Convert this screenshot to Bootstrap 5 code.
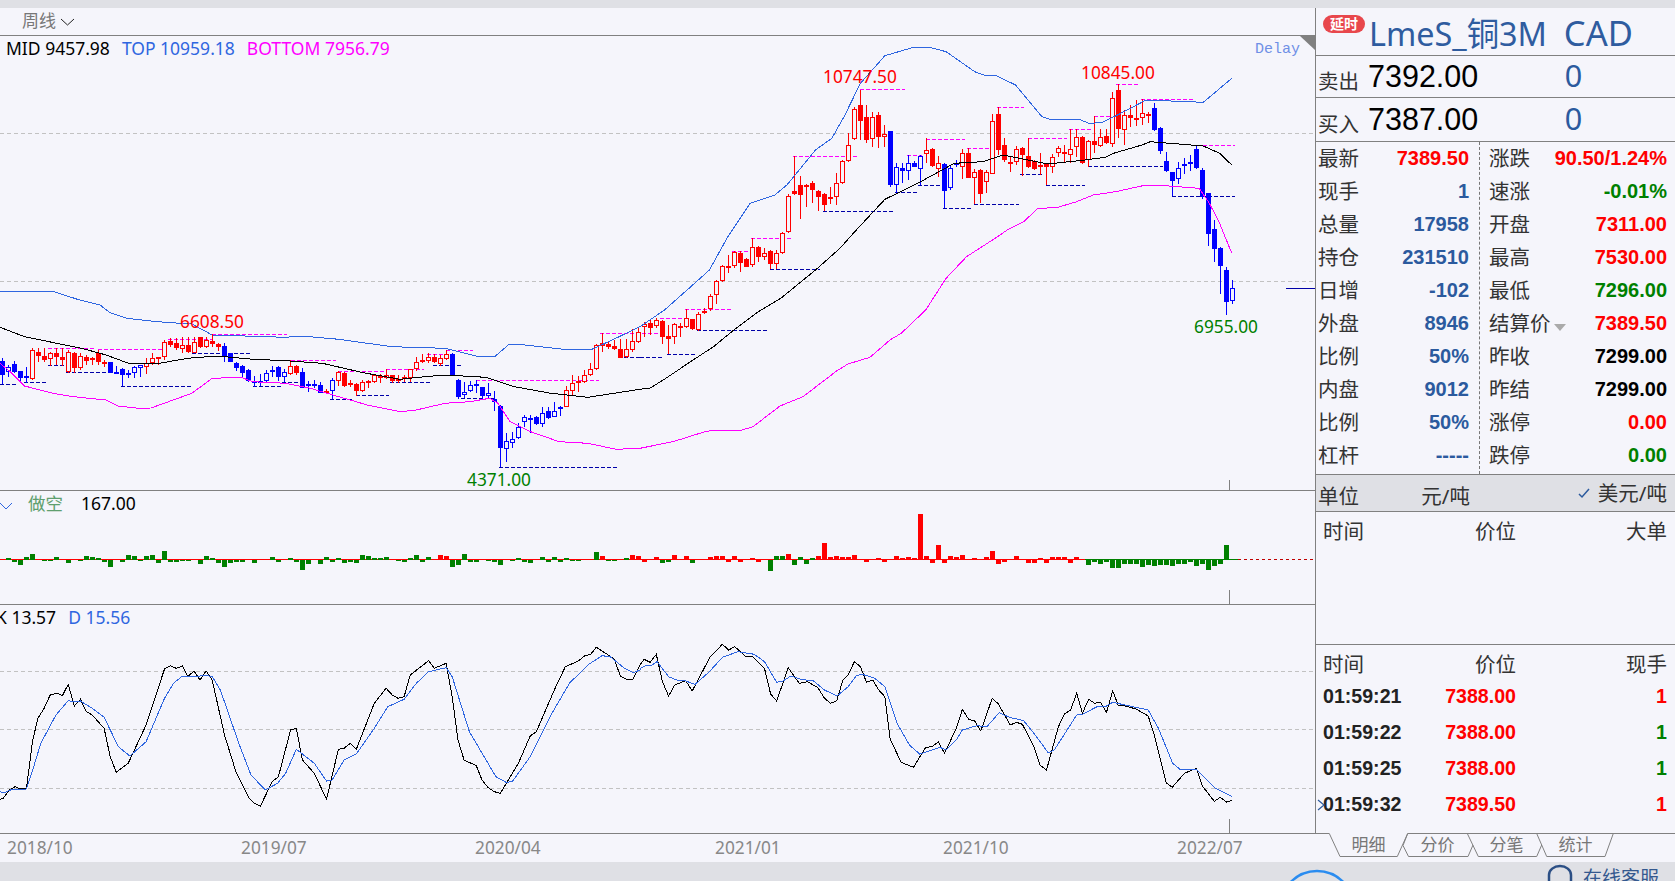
<!DOCTYPE html>
<html lang="zh">

<head>
    <meta charset="UTF-8" />
    <title>LmeS_铜3M CAD</title>
    <link href="https://cdn.jsdelivr.net/npm/bootstrap@5.3.3/dist/css/bootstrap.min.css" rel="stylesheet" />
    <style>
        html, body { height: 881px; overflow: hidden; background: #f5f5fb; }
        body { font-family: "Noto Sans", "Noto Sans CJK SC", sans-serif; color: #333; }
        .top-strip { height: 8px; background: #dfe0e5; }
        .foot-strip { height: 19px; background: #dfe0e5; overflow: hidden; position: relative; }
        .work-area { height: 854px; }

        /* chart column */
        .chart-col { width: 1316px; position: relative; overflow: hidden; flex: none; }
        .pane { border-right: 1px solid #808080; border-bottom: 1px solid #808080; font-size: 17.5px; line-height: 24px; white-space: nowrap; }
        .pane-tools { height: 28px; font-size: 17px; color: #777; padding: 0 0 0 22px; line-height: 25px; }
        .pane-main { height: 455px; padding-left: 6px; column-gap: 12px; }
        .pane-sub { height: 114px; }
        .pane-kdj { height: 229px; }
        .pane-axis { height: 28px; }
        .short-tag { margin-left: 14px; }
        .short-value { margin-left: 18px; }
        .kdj-k { margin-left: -4px; }
        .kdj-d { margin-left: 12px; }
        .chart-svg { position: absolute; left: 0; top: 0; pointer-events: none; }
        .chart-tag { position: absolute; transform: translateY(-50%); font-size: 17.3px; line-height: 24px; white-space: nowrap; }
        .delay-tag { position: absolute; left: 1255px; top: 32px; font: 15px/20px "Liberation Mono", monospace; color: #6e8fe6; }
        .c-mid { color: #000; }
        .c-top { color: #2f66e0; }
        .c-bot { color: #ff00ff; }
        .c-short { color: #5f9f6f; }

        /* quote panel */
        .quote-col { width: 359px; flex: none; }
        .q-title { height: 48px; border-bottom: 1px solid #808080; position: relative; padding-left: 53px; font-size: 32.4px; line-height: 49px; color: #2f5c9f; white-space: pre; }
        .title-code { font-size: 34.5px; }
        .delay-badge { position: absolute; left: 7px; top: 7px; width: 42px; height: 18px; border-radius: 9px; background: #e8474c; color: #fff; font-size: 14px; line-height: 18px; font-weight: 700; text-align: center; }
        .q-book { border-bottom: 1px solid #808080; padding-left: 2px; }
        .q-ask { height: 42px; }
        .q-bid { height: 44px; }
        .q-book-label { width: 50px; font-size: 20.5px; padding-top: 10px; }
        .q-book-price { width: 197px; font: 30.5px/1 "Liberation Sans", sans-serif; color: #000; }
        .q-book-size { font: 30.5px/1 "Liberation Sans", sans-serif; color: #2b5a9e; }
        .q-stats { height: 333px; border-bottom: 1px solid #808080; }
        .stat-left { width: 164px; border-right: 1px dashed #777; flex: none; height: 332px; }
        .stat-right { flex: 1; }
        .stat-row { height: 33px; line-height: 33px; font-size: 20.5px; white-space: nowrap; }
        .stat-left .stat-row { padding: 0 10px 0 2px; }
        .stat-right .stat-row { padding: 0 8px 0 9px; }
        .stat-row .num { font-size: 20px; }
        .num { font-family: "Liberation Sans", sans-serif; font-weight: 700; }
        .t-red { color: #ff0000; }
        .t-green { color: #008000; }
        .t-blue { color: #2b5a9e; }
        .t-black { color: #000; }
        .settle-arrow { display: inline-block; width: 0; height: 0; border: 6px solid transparent; border-top: 7px solid #aaa; border-bottom: 0; margin-left: 3px; vertical-align: 0; }
        .q-unit { height: 37px; background: #dfe0e5; border-bottom: 1px solid #808080; font-size: 20.5px; line-height: 42px; }
        .unit-left { width: 164px; padding: 0 10px 0 2px; flex: none; }
        .unit-right { flex: 1; padding-right: 8px; }
        .q-big { height: 133px; border-bottom: 1px solid #808080; }
        .q-ticks { height: 188px; }
        .tick-grid { display: grid; grid-template-columns: 100px 93px 1fr; padding: 0 8px 0 7px; font-size: 20.5px; position: relative; }
        .tick-head { height: 36px; line-height: 38px; }
        .q-ticks .tick-head { height: 33px; }
        .tick-row { height: 36px; line-height: 36px; font-size: 19.6px; }
        .tick-row .num:first-child { color: #222; }
        .tick-mark { position: absolute; left: 1px; top: 13px; }
        .q-tabs { height: 29px; position: relative; }
        .tab-lines { position: absolute; left: 0; top: 0; }
        .tab-row { padding-left: 18px; }
        .tab-item { width: 69px; text-align: center; font-size: 17px; line-height: 24px; color: #777; position: relative; }
        .online-help { position: absolute; left: 1583px; top: 5px; font-size: 19px; line-height: 22px; color: #34598f; white-space: nowrap; }
        .foot-art { position: absolute; left: 0; top: 0; }
    </style>
</head>

<body>
    <div class="top-strip"></div>

    <div class="d-flex work-area">
        <div class="chart-col" id="chart-col">
            <div class="pane pane-tools">周线
                <svg width="15" height="8" viewBox="0 0 15 8"><path d="M1 1l6.500 6L14 1" fill="none" stroke="#222" /></svg>
            </div>
            <div class="pane pane-main d-flex">
                <span class="c-mid">MID 9457.98</span>
                <span class="c-top">TOP 10959.18</span>
                <span class="c-bot">BOTTOM 7956.79</span>
            </div>
            <div class="pane pane-sub d-flex">
                <svg class="mt-2" width="14" height="14" viewBox="0 0 14 14"><path d="M0 4l6 6 6-6" fill="none" stroke="#2f66e0" /></svg>
                <span class="c-short short-tag">做空</span>
                <span class="c-mid short-value">167.00</span>
            </div>
            <div class="pane pane-kdj d-flex">
                <span class="c-mid kdj-k">K 13.57</span>
                <span class="c-top kdj-d">D 15.56</span>
            </div>
            <div class="pane-axis"></div>
            <div class="delay-tag">Delay</div>
        </div>

        <div class="quote-col">
            <div class="q-title"><span class="delay-badge">延时</span>LmeS_铜3M  <span class="title-code">CAD</span></div>
            <div class="q-book q-ask d-flex align-items-center">
                <div class="q-book-label">卖出</div>
                <div class="q-book-price">7392.00</div>
                <div class="q-book-size">0</div>
            </div>
            <div class="q-book q-bid d-flex align-items-center">
                <div class="q-book-label">买入</div>
                <div class="q-book-price">7387.00</div>
                <div class="q-book-size">0</div>
            </div>
            <div class="q-stats d-flex">
                <div class="stat-left">
                    <div class="stat-row d-flex justify-content-between"><span>最新</span><span class="num t-red">7389.50</span></div>
                    <div class="stat-row d-flex justify-content-between"><span>现手</span><span class="num t-blue">1</span></div>
                    <div class="stat-row d-flex justify-content-between"><span>总量</span><span class="num t-blue">17958</span></div>
                    <div class="stat-row d-flex justify-content-between"><span>持仓</span><span class="num t-blue">231510</span></div>
                    <div class="stat-row d-flex justify-content-between"><span>日增</span><span class="num t-blue">-102</span></div>
                    <div class="stat-row d-flex justify-content-between"><span>外盘</span><span class="num t-blue">8946</span></div>
                    <div class="stat-row d-flex justify-content-between"><span>比例</span><span class="num t-blue">50%</span></div>
                    <div class="stat-row d-flex justify-content-between"><span>内盘</span><span class="num t-blue">9012</span></div>
                    <div class="stat-row d-flex justify-content-between"><span>比例</span><span class="num t-blue">50%</span></div>
                    <div class="stat-row d-flex justify-content-between"><span>杠杆</span><span class="num t-blue">-----</span></div>
                </div>
                <div class="stat-right">
                    <div class="stat-row d-flex justify-content-between"><span>涨跌</span><span class="num t-red">90.50/1.24%</span></div>
                    <div class="stat-row d-flex justify-content-between"><span>速涨</span><span class="num t-green">-0.01%</span></div>
                    <div class="stat-row d-flex justify-content-between"><span>开盘</span><span class="num t-red">7311.00</span></div>
                    <div class="stat-row d-flex justify-content-between"><span>最高</span><span class="num t-red">7530.00</span></div>
                    <div class="stat-row d-flex justify-content-between"><span>最低</span><span class="num t-green">7296.00</span></div>
                    <div class="stat-row d-flex justify-content-between"><span>结算价<i class="settle-arrow"></i></span><span class="num t-red">7389.50</span></div>
                    <div class="stat-row d-flex justify-content-between"><span>昨收</span><span class="num t-black">7299.00</span></div>
                    <div class="stat-row d-flex justify-content-between"><span>昨结</span><span class="num t-black">7299.00</span></div>
                    <div class="stat-row d-flex justify-content-between"><span>涨停</span><span class="num t-red">0.00</span></div>
                    <div class="stat-row d-flex justify-content-between"><span>跌停</span><span class="num t-green">0.00</span></div>
                </div>
            </div>
            <div class="q-unit d-flex">
                <div class="unit-left d-flex justify-content-between"><span>单位</span><span>元/吨</span></div>
                <div class="unit-right d-flex justify-content-end align-items-center gap-2">
                    <svg width="12" height="12" viewBox="0 0 12 12"><path d="M1 7l3 3 7-8" fill="none" stroke="#2b5a9e" stroke-width="1.500" /></svg>
                    <span>美元/吨</span>
                </div>
            </div>
            <div class="q-big">
                <div class="tick-grid tick-head"><span>时间</span><span class="text-end">价位</span><span class="text-end">大单</span></div>
            </div>
            <div class="q-ticks">
                <div class="tick-grid tick-head"><span>时间</span><span class="text-end">价位</span><span class="text-end">现手</span></div>
                <div class="tick-grid tick-row"><span class="num">01:59:21</span><span class="num text-end t-red">7388.00</span><span class="num text-end t-red">1</span></div>
                <div class="tick-grid tick-row"><span class="num">01:59:22</span><span class="num text-end t-red">7388.00</span><span class="num text-end t-green">1</span></div>
                <div class="tick-grid tick-row"><span class="num">01:59:25</span><span class="num text-end t-red">7388.00</span><span class="num text-end t-green">1</span></div>
                <div class="tick-grid tick-row"><span class="num">01:59:32</span><span class="num text-end t-red">7389.50</span><span class="num text-end t-red">1</span>
                    <svg class="tick-mark" width="8" height="12" viewBox="0 0 8 12"><path d="M1 1l6 5-6 5" fill="none" stroke="#2b5a9e" stroke-width="1.200" /></svg>
                </div>
            </div>
            <div class="q-tabs">
                <svg class="tab-lines" width="359" height="26" viewBox="0 0 359 26">
                    <path fill="none" stroke="#808080" d="M0 .5h13.300L24 23.500h57.300L91.700 .5H359M91.700 .5L87 12.500l5.500 11H152l5-11.500M151.300 .5l11 23h58.400L225.700 12M220.700 .5l10 23H289L297.300 .5" />
                </svg>
                <div class="d-flex tab-row">
                    <div class="tab-item">明细</div>
                    <div class="tab-item">分价</div>
                    <div class="tab-item">分笔</div>
                    <div class="tab-item">统计</div>
                </div>
            </div>
        </div>
    </div>

    <div class="foot-strip">
        <svg class="foot-art" width="1675" height="19" viewBox="0 0 1675 19">
            <circle cx="1317" cy="46" r="37" fill="none" stroke="#2a8cf0" stroke-width="2.500" />
            <path d="M1549 19v-6a11 9 0 0 1 22 0v6" fill="none" stroke="#2c4f85" stroke-width="2.500" />
        </svg>
        <div class="online-help">在线客服</div>
    </div>

    <script>
        const BG = "#f5f5fb";
        const RED = "#ff0000", BLUE = "#0000ff", GREEN = "#008000", NAVY = "#0000a8", PINK = "#ff00ff";

        // coordinates below were read from the picture: x is stretched 2.45x, y 3x, from a panel origin
        const readX = (x, ox) => ox + x / 2.45;
        const readY = (y, oy) => oy + y / 3;

        // type, wick top, body top, body bottom, wick bottom. R/B filled, r/b hollow
        const left = `B 175 183 225 253,b 195 200 217 230,B 183 193 215 218,B 212 214 233 248,B 200 228 233 248,r 145 150 237 240,R 143 156 168 185,R 143 167 180 185,r 155 160 177 197,R 143 160 172 195,R 143 172 179 197,r 150 157 215 218,R 155 160 205 218,r 160 168 205 210,R 165 170 182 195,R 170 175 180 195,R 150 160 187 195,R 180 187 190 200,B 185 187 218 220,B 197 215 220 222,B 205 207 225 258,B 210 220 225 233,b 198 200 220 233,b 195 196 203 230,r 175 188 200 222,r 160 175 190 195,r 170 172 178 195,r 120 125 172 180,R 115 122 135 140,R 115 128 145 150,r 112 135 147 160,R 112 135 155 160,r 112 125 158 160,R 110 112 142 145,r 112 120 140 145,R 102 123 132 140,R 128 133 140 152,B 130 138 168 185,B 158 160 185 187,B 186 188 203 212,B 196 198 218 235,B 208 210 243 245,B 228 243 250 260,B 222 244 250 258,b 210 220 244 250,b 198 210 216 230,B 197 200 230 242,b 208 216 230 245,r 180 198 222 224,R 196 198 220 224,B 205 216 263 265,B 243 252 258 275,B 240 252 256 265,B 245 255 278 280,R 268 274 280 282,b 235 240 272 298,r 212 215 243 258,R 216 218 258 260,R 240 248 254 262,R 250 252 272 287,r 240 245 272 275,R 240 243 248 265,r 222 226 245 250,R 222 228 235 248,r 208 226 233 238,R 225 226 243 248,R 225 238 243 250,R 225 232 238 245,r 207 208 234 247,r 170 187 208 212,r 163 180 187 190,r 160 172 182 190,R 162 170 187 190,r 165 175 192 197,r 150 163 176 180,B 158 162 226 228,B 238 240 290 297,b 245 275 285 295,b 242 256 272 275,B 240 252 256 280,B 260 262 287 297,b 250 278 287 295,B 272 296 305 333,B 316 318 443 502,b 400 422 448 485,b 395 418 430 445,b 370 382 415 418,b 345 352 365 380,B 345 354 358 398,B 348 352 373 375,b 320 340 373 380,B 320 333 355 357,b 306 333 352 352,B 318 322 327 348,r 258 270 320 322,r 225 250 272 285,r 228 242 250 275,r 210 224 247 250,r 190 208 224 228,r 133 135 207 210,R 100 130 137 155,R 125 132 142 147,R 120 138 146 150,R 118 148 173 175,r 118 148 172 175,r 88 123 150 155,r 85 95 125 130`;
        const right = `r 845 853 862 890,R 838 848 865 885,r 835 840 858 865,R 840 843 892 912,R 855 888 896 942,r 850 853 892 912,R 850 858 862 890,r 808 835 862 865,R 836 838 866 870,r 815 822 870 872,r 805 814 820 822,r 763 768 808 812,r 720 723 766 792,r 676 678 722 726,R 645 678 682 700,r 632 636 677 685,R 632 640 668 695,R 655 657 680 682,r 595 622 676 680,R 618 621 650 665,r 625 640 652 660,R 630 632 672 688,r 630 640 673 688,r 575 580 638 642,r 462 468 575 578,R 348 454 462 465,R 408 435 465 536,R 432 435 440 500,R 422 428 450 490,R 450 453 470 512,R 460 462 494 514,R 440 471 477 492,r 398 428 470 495,r 360 362 430 432,r 280 316 362 365,r 200 207 296 300,R 150 195 242 300,R 195 232 299 310,r 215 232 298 322,R 215 225 290 325,r 255 283 290 320,B 272 273 435 440,b 368 382 436 458,B 370 385 392 430,b 345 370 392 420,B 362 370 380 382,b 345 348 386 435,r 295 330 343 370,R 325 328 377 380,r 348 368 388 410,B 370 372 452 505,b 378 385 445 450,B 360 370 375 380,r 328 338 382 417,R 325 340 413 415,r 388 397 415 492,R 388 390 462 490,r 390 397 425 460,r 222 243 401 403,R 202 222 330 345,R 293 316 361 365,R 348 365 370 395,r 318 328 365 375,R 320 323 345 408,R 295 348 380 385,R 360 362 386 390,R 340 375 380 405,R 368 372 380 436,r 342 352 380 400,r 318 325 340 350,R 315 336 341 370,r 268 328 344 368,r 268 292 322 352,R 288 292 370 372,r 300 304 360 380,R 228 304 314 338,r 268 290 317 322,R 268 289 310 312,r 155 175 312 322,R 132 150 267 295,r 210 226 270 315,R 195 226 234 262,R 180 234 240 258,r 178 219 234 255,R 215 222 227 250,B 190 205 269 272,B 262 264 332 342,B 335 364 392 395,B 395 397 422 468,b 365 385 416 432,B 355 372 376 402,B 345 367 371 392,B 316 328 383 387,B 385 390 470 476,B 458 460 581 618,B 540 567 628 665,B 622 625 678 762,B 680 690 785 825,b 720 745 782 792`;

        // bars in 3x pixels around the zero line
        const barsLeft = "0 2 -5 -16 5 16 0 -4 -4 6 0 -10 0 -3 9 7 3 -5 -22 0 -6 13 10 -3 10 13 -10 25 -6 -5 -4 -4 0 -13 9 3 -10 -22 -8 -6 -5 0 -10 0 0 6 -5 0 3 -5 -30 -13 0 -12 5 -7 3 -10 -5 -10 13 8 3 4 5 0 -3 -6 3 12 -5 5 0 r13 r10 -22 -16 15 -7 -6 0 -3 -5 -16 0 -3 3 -5 -10 0 6 -5 6 -5 4 -3 -2 0 0 21 r8 -3 -2 0 2 r12 r8";
        const barsRight = "r-5 r0 r7 g-10 g-5 r13 r0 r10 g-8 g0 g0 r7 r10 r10 r-5 r10 r-5 r0 r4 r-5 r0 g-32 g10 g10 r16 g-14 g7 g-11 g4 r10 r49 r7 r10 r7 r7 r13 r0 r-5 r0 r4 r-5 r0 r10 r4 r7 r4 r136 r10 r-8 r43 r-8 r10 r7 r13 r0 r4 r0 r7 r25 r-11 r-5 r0 r10 r0 r-8 r-8 r4 r-8 r7 r7 r7 r-8 r7 r0 g-14 g-5 g-11 g-5 g-23 g-23 g-11 g-11 g-11 g-20 g-14 g-17 g-14 g-14 g-17 g-11 g-11 g-5 g-17 g-11 g-29 g-17 g-11 g43 g0";

        // period high/low dashes: y, x1, x2
        const dashLeft = [
            [PINK, 143, 118, 232], [PINK, 148, 241, 405], [PINK, 116, 412, 520], [PINK, 103, 520, 703], [PINK, 181, 712, 822],
            [PINK, 214, 829, 940], [PINK, 208, 946, 1040], [PINK, 163, 1045, 1112], [PINK, 151, 1093, 1160], [PINK, 241, 1167, 1468], [PINK, 100, 1470, 1568],
            [NAVY, 253, 0, 45], [NAVY, 247, 60, 115], [NAVY, 196, 118, 160], [NAVY, 217, 162, 265], [NAVY, 259, 296, 468],
            [NAVY, 160, 470, 615], [NAVY, 258, 620, 690], [NAVY, 247, 692, 740], [NAVY, 298, 808, 865], [NAVY, 286, 873, 953],
            [NAVY, 247, 956, 1055], [NAVY, 196, 1060, 1130], [NAVY, 295, 1130, 1210], [NAVY, 502, 1222, 1512], [NAVY, 172, 1515, 1568]
        ];
        const dashRight = [
            [PINK, 880, 5, 50], [PINK, 835, 50, 108], [PINK, 808, 110, 222], [PINK, 632, 226, 268], [PINK, 595, 272, 370], [PINK, 349, 375, 532],
            [PINK, 148, 538, 650], [PINK, 346, 655, 690], [PINK, 296, 700, 796], [PINK, 325, 800, 862], [PINK, 202, 875, 942], [PINK, 295, 950, 1045],
            [PINK, 268, 1052, 1105], [PINK, 229, 1112, 1155], [PINK, 133, 1165, 1222], [PINK, 178, 1228, 1355], [PINK, 316, 1365, 1458],
            [NAVY, 952, 0, 60], [NAVY, 943, 65, 135], [NAVY, 871, 140, 310], [NAVY, 688, 318, 442], [NAVY, 514, 448, 620], [NAVY, 457, 625, 680],
            [NAVY, 436, 682, 738], [NAVY, 505, 742, 812], [NAVY, 493, 818, 928], [NAVY, 403, 932, 988], [NAVY, 436, 995, 1090], [NAVY, 379, 1098, 1282], [NAVY, 469, 1304, 1458]
        ];

        const upperA = [0, -27, 127, -27, 195, 0, 245, 15, 270, 38, 310, 55, 385, 65, 420, 68, 470, 72, 520, 105, 600, 108, 700, 112, 740, 108, 830, 118, 960, 140, 1090, 145, 1165, 168, 1212, 170, 1245, 135, 1265, 132, 1380, 148, 1450, 148, 1500, 120, 1568, 80];
        const upperB = [0, 860, 60, 810, 120, 745, 170, 690, 215, 590, 270, 490, 330, 465, 360, 435, 430, 330, 470, 295, 500, 230, 540, 130, 600, 47, 670, 22, 710, 22, 750, 35, 820, 95, 850, 108, 870, 105, 920, 135, 985, 230, 1005, 238, 1075, 238, 1100, 250, 1130, 248, 1170, 225, 1240, 180, 1380, 187, 1450, 115];
        const midA = [0, 82, 60, 110, 120, 125, 200, 145, 260, 165, 315, 190, 390, 190, 460, 175, 530, 168, 620, 178, 700, 182, 790, 190, 890, 218, 980, 238, 1040, 230, 1090, 225, 1190, 232, 1260, 260, 1350, 280, 1440, 292, 1568, 268];
        const midB = [25, 1044, 57, 1020, 130, 960, 180, 920, 230, 870, 290, 815, 345, 775, 430, 690, 490, 625, 530, 570, 600, 478, 680, 430, 770, 370, 840, 365, 890, 345, 1000, 372, 1090, 360, 1140, 352, 1160, 340, 1230, 315, 1250, 305, 1320, 312, 1380, 318, 1420, 340, 1450, 375];
        const lowA = [0, 190, 25, 215, 60, 258, 130, 280, 180, 290, 260, 300, 290, 318, 340, 325, 370, 324, 470, 280, 520, 235, 590, 232, 620, 245, 700, 250, 760, 265, 830, 290, 900, 315, 980, 335, 1020, 330, 1090, 310, 1150, 305, 1200, 295, 1220, 310, 1250, 365, 1300, 395, 1370, 425, 1440, 430, 1510, 448, 1568, 445];
        const lowReal = [673, 441.700, 703, 432.300, 713, 430, 742, 430, 753, 426.700, 780, 406, 803, 396.700, 837, 370.700, 848, 364, 870, 357.300, 890, 340];
        const lowB = [640, 880, 700, 810, 750, 715, 800, 650, 870, 595, 900, 570, 940, 545, 975, 505, 1020, 503, 1070, 485, 1110, 465, 1165, 455, 1240, 435, 1265, 435, 1370, 445, 1395, 490, 1420, 550, 1450, 640];

        const kA = [0, 598, 8, 595, 22, 570, 37, 560, 50, 567, 65, 565, 80, 420, 93, 355, 108, 325, 123, 285, 140, 280, 153, 287, 167, 253, 182, 318, 197, 298, 212, 335, 226, 345, 255, 385, 270, 470, 285, 517, 314, 490, 358, 375, 403, 207, 417, 197, 432, 205, 447, 198, 460, 230, 475, 213, 490, 240, 505, 213, 520, 240, 550, 405, 578, 515, 610, 595, 623, 610, 638, 618, 667, 545, 682, 530, 712, 390, 726, 385, 741, 480, 770, 520, 800, 598, 829, 448, 843, 445, 858, 430, 873, 448, 917, 310, 946, 265, 961, 285, 975, 295, 990, 290, 1005, 225, 1050, 182, 1064, 205, 1093, 190, 1108, 290, 1122, 420, 1137, 480, 1167, 497, 1181, 540, 1196, 563, 1211, 575, 1226, 580, 1270, 490, 1299, 408, 1314, 395, 1358, 270, 1385, 200, 1417, 183, 1432, 168, 1447, 163, 1461, 142, 1490, 165, 1505, 178, 1520, 228, 1535, 238, 1550, 238, 1568, 195];
        const dA = [0, 575, 10, 578, 30, 568, 65, 567, 80, 510, 100, 430, 137, 345, 167, 302, 182, 305, 197, 303, 226, 325, 255, 352, 290, 440, 318, 468, 358, 425, 403, 295, 425, 250, 445, 230, 475, 230, 505, 226, 520, 230, 540, 270, 585, 430, 615, 525, 650, 570, 680, 550, 700, 520, 726, 448, 770, 490, 800, 543, 814, 540, 843, 480, 873, 462, 917, 385, 950, 320, 990, 298, 1020, 250, 1050, 215, 1093, 203, 1108, 230, 1150, 395, 1215, 530, 1240, 547, 1255, 545, 1299, 470, 1350, 345, 1395, 250, 1440, 195, 1475, 167, 1495, 170, 1530, 205, 1552, 218, 1568, 210];
        const kB = [0, 195, 10, 178, 25, 187, 40, 163, 55, 245, 70, 288, 85, 255, 112, 242, 128, 273, 172, 170, 202, 133, 217, 150, 232, 140, 260, 170, 275, 168, 305, 205, 320, 282, 335, 303, 363, 203, 390, 250, 410, 245, 435, 262, 452, 295, 467, 310, 482, 302, 497, 240, 510, 225, 525, 185, 540, 200, 555, 247, 570, 240, 585, 270, 600, 290, 613, 418, 640, 487, 670, 502, 700, 442, 716, 440, 731, 425, 746, 460, 775, 385, 790, 328, 805, 358, 820, 363, 835, 393, 863, 295, 878, 312, 907, 375, 922, 367, 937, 373, 965, 440, 980, 495, 996, 510, 1025, 380, 1040, 342, 1055, 330, 1070, 280, 1084, 340, 1099, 298, 1114, 310, 1128, 307, 1143, 337, 1158, 273, 1172, 317, 1187, 317, 1215, 327, 1245, 348, 1260, 405, 1289, 548, 1304, 562, 1334, 520, 1363, 505, 1378, 558, 1407, 604, 1422, 592, 1437, 606, 1451, 601];
        const dB = [0, 205, 15, 197, 30, 195, 42, 185, 70, 230, 90, 240, 112, 243, 135, 253, 170, 215, 202, 172, 240, 155, 280, 163, 305, 185, 335, 247, 350, 243, 370, 228, 395, 238, 425, 243, 452, 270, 483, 288, 510, 260, 530, 227, 545, 223, 575, 235, 600, 260, 630, 370, 660, 435, 685, 462, 735, 442, 750, 450, 775, 420, 790, 390, 825, 377, 850, 380, 880, 338, 905, 352, 940, 362, 965, 400, 1000, 458, 1015, 450, 1070, 345, 1085, 342, 1120, 320, 1140, 320, 1158, 307, 1245, 330, 1270, 385, 1305, 490, 1325, 510, 1363, 508, 1410, 565, 1451, 590];

        let art = "";

        function box(x, y, w, h, fill) {
            art += `<rect x="${x}" y="${y}" width="${w}" height="${h}" fill="${fill}" shape-rendering="crispEdges"/>`;
        }

        function dashed(x1, x2, y, color, dash) {
            y = Math.round(y) + 0.5;
            art += `<path d="M${x1} ${y}H${x2}" stroke="${color}" stroke-dasharray="${dash}" shape-rendering="crispEdges"/>`;
        }

        function polyline(sets, color) {
            const pts = [];
            sets.forEach(([list, ox, oy, real]) => {
                for (let i = 0; i < list.length; i += 2) {
                    const x = real ? list[i] : readX(list[i], ox);
                    const y = real ? list[i + 1] : readY(list[i + 1], oy);
                    pts.push(x.toFixed(1) + "," + y.toFixed(1));
                }
            });
            art += `<polyline points="${pts.join(" ")}" fill="none" stroke="${color}" stroke-width="1" shape-rendering="crispEdges"/>`;
        }

        // grid
        [133, 281, 671, 729, 788].forEach((y) => dashed(0, 1315, y, "#c2c2c2", "4 3"));

        // period marks sit under the candles
        dashLeft.forEach(([c, y, a, b]) => dashed(readX(a, 0), readX(b, 0), readY(y, 300), c, "4 2"));
        dashRight.forEach(([c, y, a, b]) => dashed(readX(a, 640), readX(b, 640), readY(y, 40), c, "4 2"));

        // candles
        const candles = left.split(",").map((s) => [s, 300]).concat(right.split(",").map((s) => [s, 40]));
        candles.forEach(([s, oy], i) => {
            const [t, wt, bt, bb, wb] = s.split(" ");
            const x = 2 + 6 * i;
            const color = t === "r" || t === "R" ? RED : BLUE;
            const y1 = Math.round(readY(+bt, oy));
            const y2 = Math.max(y1 + 2, Math.round(readY(+bb, oy)));
            const w1 = Math.round(readY(+wt, oy));
            const w2 = Math.round(readY(+wb, oy));
            box(x, w1, 1, w2 - w1, color);
            box(x - 2, y1, 5, y2 - y1, color);
            if (t === "r" || t === "b") box(x - 1, y1 + 1, 3, y2 - y1 - 2, BG);
        });

        // bollinger lines
        polyline([[upperA, 0, 300], [upperB, 640, 40]], "#2f66e0");
        polyline([[midA, 0, 300], [midB, 640, 40]], "#000");
        polyline([[lowA, 0, 300], [lowReal, 0, 0, true], [lowB, 640, 40]], PINK);

        // sub panel zero line and bars
        box(0, 559, 1085, 1, RED);
        box(1085, 559, 153, 1, GREEN);
        dashed(1238, 1315, 559, "#c00000", "3 3");
        const tokens = barsLeft.split(" ").concat(barsRight.split(" "));
        tokens.forEach((tok, i) => {
            const color = tok[0] === "r" ? RED : GREEN;
            const v = parseInt(tok.replace(/[rg]/, ""), 10) / 3;
            if (!v) return;
            const x = 2 + 6 * i - 2;
            const h = Math.max(1, Math.round(Math.abs(v)));
            box(x, v > 0 ? 559 - h : 560, 5, h + (v > 0 ? 1 : 0), color);
        });

        // K and D
        polyline([[kA, 0, 600], [kB, 640, 600]], "#000");
        polyline([[dA, 0, 600], [dB, 640, 600]], "#2f66e0");

        // ticks on the last bar, corner flag, price stub
        box(1229, 480, 1, 10, "#808080");
        box(1229, 590, 1, 14, "#808080");
        box(1229, 819, 1, 14, "#808080");
        box(1286, 288, 29, 1, "#0000a8");
        art += `<polygon points="1300,36 1315,36 1315,50" fill="#808080"/>`;

        const col = document.getElementById("chart-col");
        col.insertAdjacentHTML("beforeend", `<svg class="chart-svg" width="1315" height="854" viewBox="0 8 1315 854">${art}</svg>`);

        // labels pinned to chart positions
        const tags = [
            ["6608.50", 180, 322, "#ff0000"],
            ["4371.00", 467, 480, "#008000"],
            ["10747.50", 823, 77, "#ff0000"],
            ["10845.00", 1081, 73, "#ff0000"],
            ["6955.00", 1194, 327, "#008000"],
            ["2018/10", 7, 848, "#888"],
            ["2019/07", 241, 848, "#888"],
            ["2020/04", 475, 848, "#888"],
            ["2021/01", 715, 848, "#888"],
            ["2021/10", 943, 848, "#888"],
            ["2022/07", 1177, 848, "#888"],
        ];
        tags.forEach(([text, x, y, color]) => {
            const el = document.createElement("div");
            el.className = "chart-tag";
            el.textContent = text;
            el.style.left = x + "px";
            el.style.top = y - 8 + "px";
            el.style.color = color;
            col.appendChild(el);
        });
    </script>
</body>

</html>
